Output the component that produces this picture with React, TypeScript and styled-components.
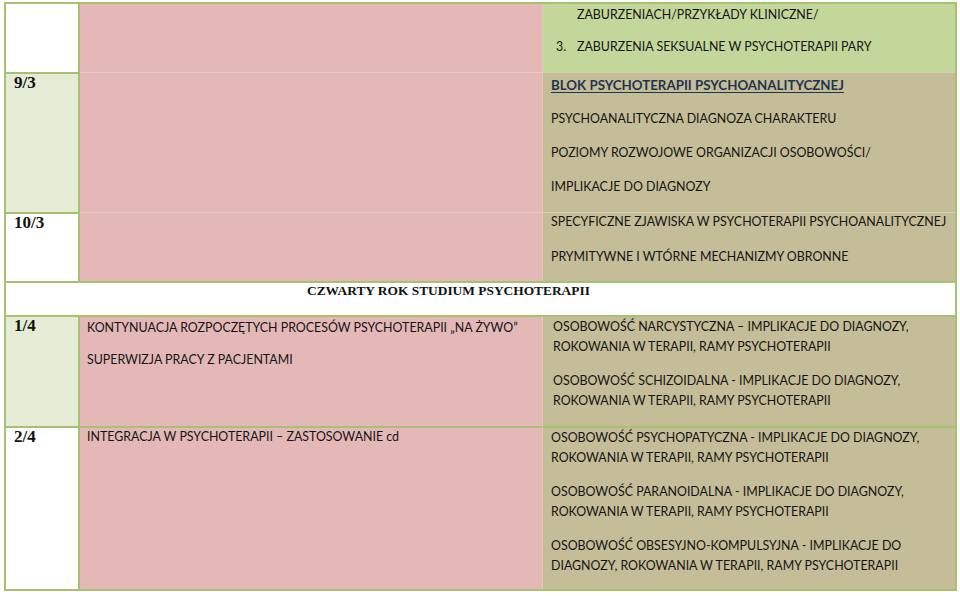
import React from 'react'
import styled, { createGlobalStyle } from 'styled-components'

const GlobalStyle = createGlobalStyle`
  html, body {
    margin: 0;
    padding: 0;
    background: #ffffff;
  }
  body {
    font-family: Lato, 'Open Sans', sans-serif;
    color: #141414;
  }
`

const GREEN_LINE = '#a6c270'

const fills = {
  white: '#ffffff',
  lime: '#e4ecd6',
  pink: '#e5b8b8',
  olive: '#c5bd98',
  green: '#c4d79b',
}

const faintLines = {
  white: '#e9efdf',
  lime: '#e9efdf',
  pink: '#edc7c7',
  olive: '#d6d0b3',
  green: '#d6e3b8',
}

type Fill = keyof typeof fills
type Edge = 'green' | 'faint' | 'none'

const Page = styled.div`
  padding: 2px 0 0 4px;
`

const Table = styled.div`
  width: 953px;
  box-sizing: border-box;
  border: 2px solid ${GREEN_LINE};
`

const Row = styled.div<{ $h: number }>`
  display: grid;
  grid-template-columns: 74px 463px 1fr;
  height: ${(p) => p.$h}px;
`

const Cell = styled.div<{ $fill: Fill; $top?: Edge; $right?: Edge; $pad?: string }>`
  box-sizing: border-box;
  background: ${(p) => fills[p.$fill]};
  border-top: ${(p) =>
    p.$top === 'green'
      ? `2px solid ${GREEN_LINE}`
      : p.$top === 'faint'
        ? `1px solid ${faintLines[p.$fill]}`
        : 'none'};
  border-right: ${(p) =>
    p.$right === 'green'
      ? `2px solid ${GREEN_LINE}`
      : p.$right === 'faint'
        ? '1px solid #d9cfb0'
        : 'none'};
  padding: ${(p) => p.$pad || '0'};
  overflow: hidden;
`

const HeaderCell = styled.div`
  grid-column: 1 / -1;
  box-sizing: border-box;
  background: #ffffff;
  border-top: 2px solid ${GREEN_LINE};
  padding: 0 0 0 301px;
`

const Heading = styled.div`
  font-family: 'Liberation Serif', 'DejaVu Serif', serif;
  font-weight: 700;
  font-size: 13.4px;
  line-height: 16px;
  color: #111;
  white-space: nowrap;
`

const Num = styled.div`
  font-family: 'Liberation Serif', 'DejaVu Serif', serif;
  font-weight: 700;
  font-size: 17px;
  line-height: 18px;
  color: #111;
`

const Para = styled.p<{ $lh?: number; $gap?: number }>`
  margin: 0 0 ${(p) => p.$gap ?? 14}px;
  font-size: 12.4px;
  line-height: ${(p) => p.$lh ?? 20}px;
  white-space: nowrap;
`

const BlockTitle = styled(Para)`
  font-size: 13.3px;
  font-weight: 700;
  color: #1d3552;
  text-decoration: underline;
  text-underline-offset: 2px;
`

const ListItem = styled.div`
  display: flex;
  font-size: 12.4px;
  line-height: 20px;
  white-space: nowrap;
`

const Marker = styled.span`
  width: 21px;
  flex: none;
`

const thirdYear = [
  ['OSOBOWOŚĆ NARCYSTYCZNA – IMPLIKACJE DO DIAGNOZY,', 'ROKOWANIA W TERAPII, RAMY PSYCHOTERAPII'],
  ['OSOBOWOŚĆ SCHIZOIDALNA - IMPLIKACJE DO DIAGNOZY,', 'ROKOWANIA W TERAPII, RAMY PSYCHOTERAPII'],
]

const integration = [
  ['OSOBOWOŚĆ PSYCHOPATYCZNA - IMPLIKACJE DO DIAGNOZY,', 'ROKOWANIA W TERAPII, RAMY PSYCHOTERAPII'],
  ['OSOBOWOŚĆ PARANOIDALNA - IMPLIKACJE DO DIAGNOZY,', 'ROKOWANIA W TERAPII, RAMY PSYCHOTERAPII'],
  ['OSOBOWOŚĆ OBSESYJNO-KOMPULSYJNA - IMPLIKACJE DO', 'DIAGNOZY, ROKOWANIA W TERAPII, RAMY PSYCHOTERAPII'],
]

function TwoLine({ lines }: { lines: string[][] }) {
  return (
    <>
      {lines.map((l) => (
        <Para key={l[0]} $lh={19.5} $gap={15}>
          {l[0]}
          <br />
          {l[1]}
        </Para>
      ))}
    </>
  )
}

export default function App() {
  return (
    <Page>
      <GlobalStyle />
      <Table>
        <Row $h={68}>
          <Cell $fill="white" $right="green" />
          <Cell $fill="pink" $right="faint" />
          <Cell $fill="green" $pad="1px 0 0 13px">
            <ListItem style={{ marginBottom: 12 }}>
              <Marker />
              ZABURZENIACH/PRZYKŁADY KLINICZNE/
            </ListItem>
            <ListItem>
              <Marker>3.</Marker>
              ZABURZENIA SEKSUALNE W PSYCHOTERAPII PARY
            </ListItem>
          </Cell>
        </Row>

        <Row $h={140}>
          <Cell $fill="lime" $top="green" $right="green" $pad="0 0 0 8px">
            <Num>9/3</Num>
          </Cell>
          <Cell $fill="pink" $top="faint" $right="faint" />
          <Cell $fill="olive" $top="faint" $pad="2px 0 0 8px">
            <BlockTitle>BLOK PSYCHOTERAPII PSYCHOANALITYCZNEJ</BlockTitle>
            <Para>PSYCHOANALITYCZNA DIAGNOZA CHARAKTERU</Para>
            <Para>POZIOMY ROZWOJOWE ORGANIZACJI OSOBOWOŚCI/</Para>
            <Para>IMPLIKACJE DO DIAGNOZY</Para>
          </Cell>
        </Row>

        <Row $h={69}>
          <Cell $fill="white" $top="green" $right="green" $pad="0 0 0 8px">
            <Num>10/3</Num>
          </Cell>
          <Cell $fill="pink" $top="faint" $right="faint" />
          <Cell $fill="olive" $top="faint" $pad="0 0 0 8px">
            <Para $lh={17} $gap={18}>
              SPECYFICZNE ZJAWISKA W PSYCHOTERAPII PSYCHOANALITYCZNEJ
            </Para>
            <Para $lh={17}>PRYMITYWNE I WTÓRNE MECHANIZMY OBRONNE</Para>
          </Cell>
        </Row>

        <Row $h={34}>
          <HeaderCell>
            <Heading>CZWARTY ROK STUDIUM PSYCHOTERAPII</Heading>
          </HeaderCell>
        </Row>

        <Row $h={111}>
          <Cell $fill="lime" $top="green" $right="green" $pad="0 0 0 8px">
            <Num>1/4</Num>
          </Cell>
          <Cell $fill="pink" $top="green" $right="faint" $pad="1px 0 0 7px">
            <Para $gap={12}>KONTYNUACJA ROZPOCZĘTYCH PROCESÓW PSYCHOTERAPII „NA ŻYWO”</Para>
            <Para>SUPERWIZJA PRACY Z PACJENTAMI</Para>
          </Cell>
          <Cell $fill="olive" $top="green" $pad="0 0 0 10px">
            <TwoLine lines={thirdYear} />
          </Cell>
        </Row>

        <Row $h={163}>
          <Cell $fill="white" $top="green" $right="green" $pad="0 0 0 8px">
            <Num>2/4</Num>
          </Cell>
          <Cell $fill="pink" $top="green" $right="faint" $pad="0 0 0 7px">
            <Para $lh={18}>INTEGRACJA W PSYCHOTERAPII – ZASTOSOWANIE cd</Para>
          </Cell>
          <Cell $fill="olive" $top="green" $pad="0 0 0 8px">
            <TwoLine lines={integration} />
          </Cell>
        </Row>
      </Table>
    </Page>
  )
}
